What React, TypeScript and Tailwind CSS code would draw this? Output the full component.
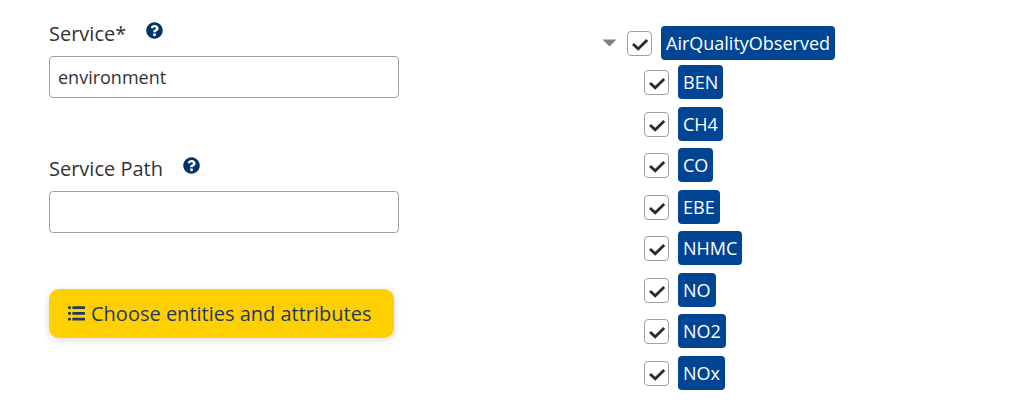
import { useState } from "react";
import { FaQuestionCircle } from "react-icons/fa";

const ENTITY = "AirQualityObserved";
const ATTRIBUTES = ["BEN", "CH4", "CO", "EBE", "NHMC", "NO", "NO2", "NOx"];

function ListIcon() {
  return (
    <svg viewBox="0 0 17 15" className="h-[15px] w-[17px]" fill="currentColor" aria-hidden="true">
      {[0.2, 6, 11.8].map((y) => (
        <g key={y}>
          <rect x="0" y={y} width="3" height="2.8" rx="1" />
          <rect x="4.4" y={y} width="12.6" height="2.8" rx="0.5" />
        </g>
      ))}
    </svg>
  );
}

function TextField({ id, label, initial = "" }: { id: string; label: string; initial?: string }) {
  const [value, setValue] = useState(initial);
  return (
    <div className="flex flex-col gap-[10px]">
      <div className="flex items-start gap-5">
        <label htmlFor={id} className="text-[20px] leading-6">
          {label}
        </label>
        <button type="button" aria-label={`Help for ${label}`} className="text-[#003366]">
          <FaQuestionCircle className="size-[17px]" />
        </button>
      </div>
      <input
        id={id}
        type="text"
        value={value}
        onChange={(e) => setValue(e.target.value)}
        className="h-[42px] w-full rounded-[4px] border border-[#a0a0a0] bg-white px-2 text-[18px]"
      />
    </div>
  );
}

function TreeItem({ name, checked, onToggle }: { name: string; checked: boolean; onToggle: () => void }) {
  return (
    <label className="flex w-fit items-center gap-[9px]">
      <span className="grid size-[25px]">
        <input
          type="checkbox"
          checked={checked}
          onChange={onToggle}
          className="peer col-start-1 row-start-1 size-[25px] appearance-none rounded-[4px] border border-[#a0a0a0] bg-white"
        />
        <svg
          viewBox="0 0 25 25"
          className="pointer-events-none invisible col-start-1 row-start-1 size-[25px] peer-checked:visible"
          fill="none"
          stroke="#2b2b2b"
          strokeWidth="2.8"
          aria-hidden="true"
        >
          <path d="M6 13 L11.2 17.8 L20.2 9" />
        </svg>
      </span>
      <span className="rounded-[4px] bg-[#004494] px-[5px] py-[5px] text-[18px] leading-6 text-white">{name}</span>
    </label>
  );
}

export default function App() {
  const [open, setOpen] = useState(true);
  const [selected, setSelected] = useState<string[]>([ENTITY, ...ATTRIBUTES]);
  const toggle = (name: string) =>
    setSelected((s) => (s.includes(name) ? s.filter((n) => n !== name) : [...s, name]));

  return (
    <main className="grid grid-cols-[minmax(0,350px)_minmax(0,1fr)] items-start gap-x-[203px] bg-white pl-[49px] font-['Open_Sans',sans-serif] text-[#333333]">
      <form className="flex flex-col items-start pt-[22px]" onSubmit={(e) => e.preventDefault()}>
        <div className="flex w-full flex-col gap-[59px]">
          <TextField id="service" label="Service*" initial="environment" />
          <TextField id="service-path" label="Service Path" />
        </div>
        <button
          type="submit"
          className="mt-14 flex h-[49px] items-center gap-[6px] rounded-[10px] bg-[#ffd000] pr-[22px] pl-[19px] text-[20px] leading-7 text-[#1f3864] shadow-[0_2px_8px_rgba(0,0,0,0.15)]"
        >
          <ListIcon />
          Choose entities and attributes
        </button>
      </form>
      <section aria-label="Entities and attributes" className="pt-[26px]">
        <div className="flex items-center gap-[10px]">
          <button type="button" aria-label="Toggle attributes" aria-expanded={open} onClick={() => setOpen(!open)}>
            <svg viewBox="0 0 15 8" className="h-2 w-[15px]" fill="#808080" aria-hidden="true">
              <path d="M0.5 0.5 H14.5 L7.5 7.5 Z" />
            </svg>
          </button>
          <TreeItem name={ENTITY} checked={selected.includes(ENTITY)} onToggle={() => toggle(ENTITY)} />
        </div>
        {open && (
          <ul className="pt-[5px] pl-[42px]">
            {ATTRIBUTES.map((name) => (
              <li key={name} className="odd:mb-2 even:mb-[7px]">
                <TreeItem name={name} checked={selected.includes(name)} onToggle={() => toggle(name)} />
              </li>
            ))}
          </ul>
        )}
      </section>
    </main>
  );
}
